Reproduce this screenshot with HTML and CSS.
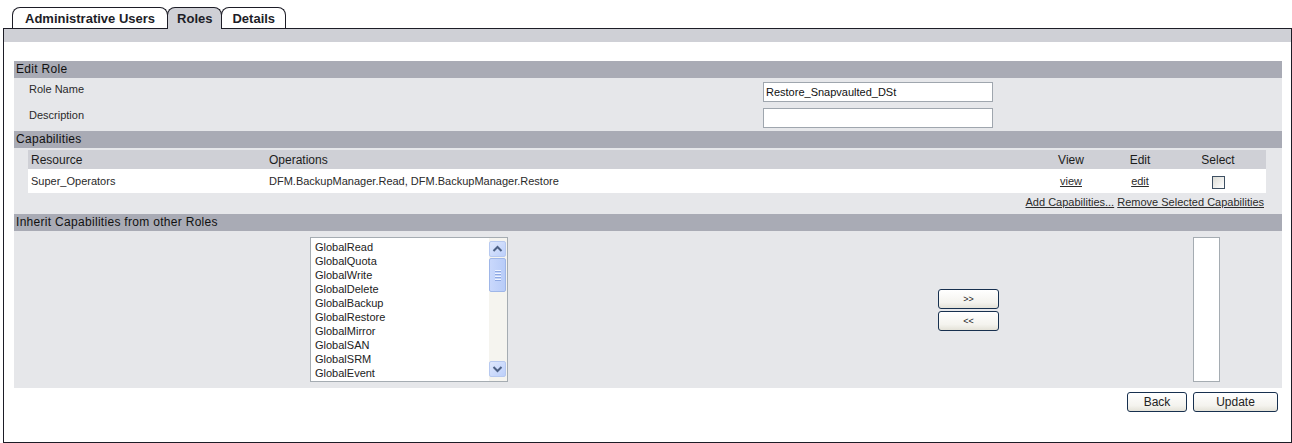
FILE: index.html
```html
<!DOCTYPE html>
<html lang="en">
<head>
    <meta charset="UTF-8">
    <title>Roles</title>
    <link rel="stylesheet" href="styles.css">
</head>
<body>
<div class="page">
    <div class="tabs">
        <div class="tab tab-admin">Administrative Users</div>
        <div class="tab active">Roles</div>
        <div class="tab tab-details">Details</div>
    </div>

    <div class="panel">
        <div class="panel-strip"></div>
        <div class="content">

            <!-- Edit Role -->
            <div class="section-head">Edit Role</div>
            <div class="form-block">
                <div class="form-row">
                    <div class="form-label">Role Name</div>
                    <input class="text-input" type="text" value="Restore_Snapvaulted_DSt">
                </div>
                <div class="form-row">
                    <div class="form-label">Description</div>
                    <input class="text-input" type="text" value="">
                </div>
            </div>

            <!-- Capabilities -->
            <div class="section-head">Capabilities</div>
            <div class="caps-block">
                <div class="caps-table">
                    <div class="caps-row caps-header">
                        <div class="cell">Resource</div>
                        <div class="cell">Operations</div>
                        <div class="cell center">View</div>
                        <div class="cell center">Edit</div>
                        <div class="cell center">Select</div>
                    </div>
                    <div class="caps-row caps-data">
                        <div class="cell">Super_Operators</div>
                        <div class="cell">DFM.BackupManager.Read, DFM.BackupManager.Restore</div>
                        <div class="cell center"><a href="#">view</a></div>
                        <div class="cell center"><a href="#">edit</a></div>
                        <div class="cell center"><span class="checkbox"></span></div>
                    </div>
                </div>
                <div class="caps-links">
                    <a href="#">Add Capabilities...</a>
                    <a href="#">Remove Selected Capabilities</a>
                </div>
            </div>

            <!-- Inherit -->
            <div class="section-head">Inherit Capabilities from other Roles</div>
            <div class="inherit-block">
                <div></div>
                <div class="listbox">
                    <ul class="list-items">
                        <li>GlobalRead</li>
                        <li>GlobalQuota</li>
                        <li>GlobalWrite</li>
                        <li>GlobalDelete</li>
                        <li>GlobalBackup</li>
                        <li>GlobalRestore</li>
                        <li>GlobalMirror</li>
                        <li>GlobalSAN</li>
                        <li>GlobalSRM</li>
                        <li>GlobalEvent</li>
                    </ul>
                    <div class="scrollbar">
                        <div class="sb-btn">
                            <svg width="15" height="14" viewBox="0 0 15 14"><path d="M3.5 9 L7.5 5 L11.5 9" fill="none" stroke="#4d6185" stroke-width="2"/></svg>
                        </div>
                        <div class="sb-thumb">
                            <span></span><span></span><span></span><span></span>
                        </div>
                        <div class="sb-track"></div>
                        <div class="sb-btn">
                            <svg width="15" height="14" viewBox="0 0 15 14"><path d="M3.5 5 L7.5 9 L11.5 5" fill="none" stroke="#4d6185" stroke-width="2"/></svg>
                        </div>
                    </div>
                </div>
                <div></div>
                <div class="move-buttons">
                    <button class="button small">&gt;&gt;</button>
                    <button class="button small">&lt;&lt;</button>
                </div>
                <div></div>
                <div class="listbox empty"></div>
                <div></div>
            </div>

            <div class="actions">
                <button class="button back">Back</button>
                <button class="button update">Update</button>
            </div>

        </div>
    </div>
</div>
</body>
</html>
```

FILE: styles.css
```css
body {
    margin: 0;
    background-color: #ffffff;
    font-family: "Liberation Sans", Arial, sans-serif;
    font-size: 11px;
    color: #2a2a2a;
}
.page {
    padding: 7px 0 0 3px;
    width: 1289px;
}
.tabs {
    display: flex;
    padding-left: 9px;
    height: 21px;
}
.tab {
    position: relative;
    height: 20px;
    line-height: 21px;
    padding: 0 9px;
    margin-right: -1px;
    border: 1px solid #1d1d27;
    border-bottom: none;
    border-radius: 8px 8px 0 0;
    background-color: #ffffff;
    font-size: 13px;
    font-weight: bold;
    color: #1d1d27;
}
.tab-admin {
    padding: 0 12px;
}
.tab-details {
    padding: 0 10px;
}
.tab.active {
    background-color: #cfd0d6;
    z-index: 1;
}
.tab.active::after {
    content: "";
    position: absolute;
    left: 0;
    right: 0;
    bottom: -1px;
    height: 2px;
    background-color: #cfd0d6;
}
.panel {
    border: 1px solid #1d1d27;
    height: 413px;
}
.panel-strip {
    height: 13px;
    background-color: #cfd0d6;
}
.content {
    padding: 19px 9px 0 10px;
}
.section-head {
    height: 17px;
    line-height: 17px;
    padding-left: 2px;
    background-color: #a9abb5;
    font-size: 12px;
    letter-spacing: 0.3px;
    color: #111;
}
.form-block {
    background-color: #e6e7ea;
    padding: 4px 0 3px;
    display: flex;
    flex-direction: column;
    gap: 6px;
}
.form-row {
    display: flex;
    align-items: flex-start;
}
.form-label {
    width: 734px;
    padding-left: 15px;
    line-height: 14px;
}
.text-input {
    box-sizing: border-box;
    width: 230px;
    height: 20px;
    margin: 0;
    padding: 0 2px;
    border: 1px solid #9fa6ae;
    font-family: "Liberation Sans", Arial, sans-serif;
    font-size: 11px;
    color: #111;
}
.caps-block {
    background-color: #e6e7ea;
    padding: 2px 16px 0 14px;
    height: 64px;
}
.caps-row {
    display: grid;
    grid-template-columns: 238px 770px 70px 68px 88px;
    align-items: center;
}
.caps-header {
    height: 19px;
    background-color: #cfd0d6;
    font-size: 12px;
    color: #1c1c1c;
}
.caps-data {
    height: 24px;
    background-color: #ffffff;
}
.cell {
    padding-left: 3px;
}
.cell.center {
    padding-left: 0;
    text-align: center;
}
a {
    color: #2b2b2b;
}
.checkbox {
    display: inline-block;
    box-sizing: border-box;
    width: 13px;
    height: 13px;
    margin-top: 2px;
    border: 1px solid #3d4f62;
    background: linear-gradient(135deg, #dcdcd6, #ffffff);
    vertical-align: middle;
}
.caps-links {
    text-align: right;
    padding-top: 3px;
    padding-right: 2px;
    line-height: 13px;
}
.inherit-block {
    display: grid;
    grid-template-columns: 296px 198px 430px 61px 194px 27px 1fr;
    align-items: center;
    background-color: #e6e7ea;
    padding: 6px 0;
}
.listbox {
    box-sizing: border-box;
    height: 145px;
    border: 1px solid #a5acb2;
    background-color: #ffffff;
    display: flex;
}
.list-items {
    flex: 1;
    list-style: none;
    margin: 0;
    padding: 2px 0 0 4px;
}
.list-items li {
    line-height: 14px;
    color: #222;
}
.scrollbar {
    width: 17px;
    padding: 3px 1px 4px 0;
    background-color: #f5f4ef;
    display: flex;
    flex-direction: column;
}
.sb-btn {
    height: 14px;
    border: 1px solid #b7c9f0;
    border-radius: 2px;
    background: linear-gradient(135deg, #dfe8fd, #bccffa);
}
.sb-btn svg {
    display: block;
}
.sb-thumb {
    height: 32px;
    margin-top: 1px;
    border: 1px solid #9fb6e8;
    border-radius: 2px;
    background: linear-gradient(90deg, #c9d8fc, #b8ccf8);
    display: flex;
    flex-direction: column;
    align-items: center;
    justify-content: center;
    gap: 1px;
}
.sb-thumb span {
    width: 6px;
    height: 1px;
    background-color: #eef3ff;
    border-bottom: 1px solid #8ea8e2;
}
.sb-track {
    flex: 1;
}
.move-buttons {
    display: flex;
    flex-direction: column;
    gap: 2px;
}
.button {
    box-sizing: border-box;
    height: 20px;
    margin: 0;
    padding: 0;
    border: 1px solid #17304f;
    border-radius: 3px;
    background: linear-gradient(#ffffff, #f4f3ee 70%, #e4e2d8);
    font-family: "Liberation Sans", Arial, sans-serif;
    font-size: 12px;
    color: #222;
}
.button.small {
    width: 61px;
    font-size: 9px;
}
.actions {
    display: flex;
    justify-content: flex-end;
    gap: 6px;
    padding: 4px 4px 0 0;
}
.button.back {
    width: 60px;
}
.button.update {
    width: 85px;
}
```
